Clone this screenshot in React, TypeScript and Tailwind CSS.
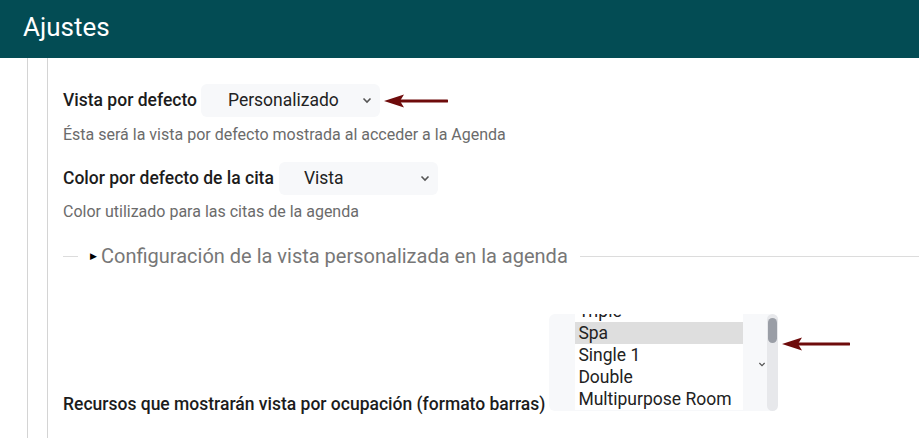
import React from "react";

const font = { fontFamily: "Roboto, 'Noto Sans', sans-serif" };

function Chevron({ className = "" }: { className?: string }) {
  return (
    <svg width="10" height="7" viewBox="0 0 10 7" className={className}>
      <polyline points="1.5,1.5 5,5 8.5,1.5" fill="none" stroke="#555" strokeWidth="1.6" />
    </svg>
  );
}

function Arrow({ width }: { width: number }) {
  return (
    <svg width={width} height="16" viewBox={`0 0 ${width} 16`}>
      <line x1="14" y1="8" x2={width - 1} y2="8" stroke="#6e0b0b" strokeWidth="3" strokeLinecap="round" />
      <polygon points="0,8 20,1.5 16,8 20,14.5" fill="#6e0b0b" />
    </svg>
  );
}

function FakeSelect({ value, width, pad }: { value: string; width: string; pad: string }) {
  return (
    <div className={`flex h-[33px] items-center justify-between rounded-md bg-[#f7f8fa] pr-[8px] text-[17.5px] text-[#222] ${width} ${pad}`}>
      <span>{value}</span>
      <Chevron />
    </div>
  );
}

const resources = ["Triple", "Spa", "Single 1", "Double", "Multipurpose Room"];

export default function App() {
  return (
    <div className="h-[438px] w-[919px] overflow-hidden bg-white" style={font}>
      <div className="flex h-[58px] items-center bg-[#034c54] px-[23px] pb-[3px]">
        <h1 className="text-[26px] text-white">Ajustes</h1>
      </div>
      <div className="pl-[27px]">
        <div className="border-l border-[#d4d4d4] pl-[19px]">
          <div className="h-[380px] border-l border-[#d4d4d4] pl-[15px] pt-[26px]">
            <div className="flex items-center gap-[4px]">
              <span className="text-[17.5px] font-medium text-[#1c1c1c]">Vista por defecto</span>
              <FakeSelect value="Personalizado" width="w-[179px]" pad="pl-[27px]" />
              <Arrow width={64} />
            </div>
            <p className="mt-[8px] text-[16px] leading-[20px] text-[#6b6b6b]">
              Ésta será la vista por defecto mostrada al acceder a la Agenda
            </p>

            <div className="mt-[17px] flex items-center gap-[5px]">
              <span className="text-[17.5px] font-medium text-[#1c1c1c]">Color por defecto de la cita</span>
              <FakeSelect value="Vista" width="w-[159px]" pad="pl-[25px]" />
            </div>
            <p className="mt-[7px] text-[16px] leading-[20px] text-[#6b6b6b]">
              Color utilizado para las citas de la agenda
            </p>

            <div className="mt-[21px] flex items-center">
              <div className="h-px w-[15px] bg-[#dcdcdc]" />
              <div className="flex items-center px-[12px] text-[20px] leading-[26px] text-[#777]">
                <span className="mr-[4px] text-[9px] text-black">▶</span>
                Configuración de la vista personalizada en la agenda
              </div>
              <div className="h-px flex-1 bg-[#dcdcdc]" />
            </div>

            <div className="mt-[45px] flex items-end gap-[4px]">
              <span className="-mb-[4px] text-[17.5px] leading-[22px] font-medium text-[#1c1c1c]">
                Recursos que mostrarán vista por ocupación (formato barras)
              </span>
              <div className="flex h-[97px] w-[229px] rounded-md bg-[#f7f8fa] pl-[26px]">
                <div className="h-[96px] w-[168px] overflow-hidden bg-white text-[17.5px] leading-[22px] text-[#222]">
                  <div className="-mt-[14px]">
                    {resources.map((r) => (
                      <div key={r} className={`h-[22px] px-[3px] ${r === "Spa" ? "bg-[#dedede]" : ""}`}>
                        {r}
                      </div>
                    ))}
                  </div>
                </div>
                <div className="flex flex-1 items-center justify-end pt-[4px]">
                  <Chevron className="scale-75" />
                </div>
                <div className="h-[97px] w-[11px] rounded-full bg-[#e7e8eb] px-[1px] pt-[4px]">
                  <div className="h-[25px] w-full rounded-full bg-[#9a9ea6]" />
                </div>
              </div>
              <div className="mb-[59px]">
                <Arrow width={68} />
              </div>
            </div>
          </div>
        </div>
      </div>
    </div>
  );
}
